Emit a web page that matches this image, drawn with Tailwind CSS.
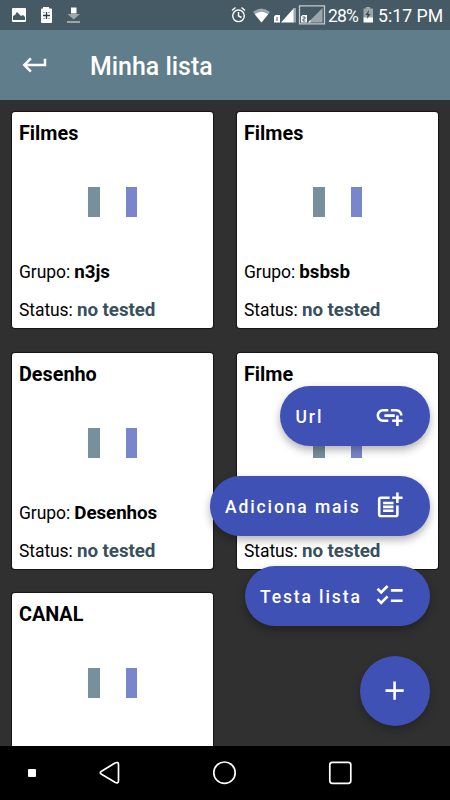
<!DOCTYPE html>
<html lang="pt">
<head>
<meta charset="utf-8">
<title>Minha lista</title>
<script src="https://cdn.jsdelivr.net/npm/@tailwindcss/browser@4"></script>
</head>
<body class="bg-black">
<div class="relative flex h-[800px] w-[450px] flex-col overflow-hidden bg-[#303030] font-['Roboto',sans-serif]">
  <!-- status bar -->
  <div class="flex h-[30px] shrink-0 items-center justify-between bg-[#455a64] pl-[12px] pr-[8px] text-white">
    <svg width="70" height="30" viewBox="12 0 70 30">
      <path fill="#fff" fill-rule="evenodd" d="M13 8h12a1 1 0 0 1 1 1v12a1 1 0 0 1-1 1H13a1 1 0 0 1-1-1V9a1 1 0 0 1 1-1zm0 12h12v-3l-2-2-2 1-4-4-2 3-2 1z"/>
      <path fill="#fff" d="M43 7h6v1.500h2a1 1 0 0 1 1 1V22a1 1 0 0 1-1 1H42a1 1 0 0 1-1-1V9.500a1 1 0 0 1 1-1h1z"/>
      <path stroke="#263f4a" stroke-width="1.300" d="M46.500 12v7M43 15.500h7"/>
      <path stroke="#455a64" stroke-width="1" d="M43.500 12.500h1M48.500 12.500h1M43.500 18.500h1M48.500 18.500h1"/>
      <path fill="#9ba6ab" d="M71 13h5.500V14H80l-6.300 5.500L67.500 14H71zM67 21h13v2H67z"/>
      <path fill="#fff" d="M71 7.500h5.500V13H71z"/>
    </svg>
    <div class="flex items-center">
      <svg width="97" height="30" viewBox="230 0 97 30">
        <g fill="none" stroke="#fff" stroke-width="1.400">
          <circle cx="238.500" cy="15.800" r="5.800"/>
          <path d="M238.500 12v4l3 1.500M232 10.500l3.500-3M245 10.500l-3.500-3"/>
        </g>
        <path fill="#9ba6ab" d="M253 12q8.500-7 17 0l-8.500 10.500z"/>
        <path fill="#fff" d="M254.800 14.200q6.700-5 13.400 0l-6.700 8.300z"/>
        <path fill="#9ba6ab" d="M293 8h3v14.500h-3z"/>
        <path fill="#fff" d="M281 22.500 293.500 8.500v14z"/>
        <path fill="#fff" d="M274 16.500l1.500-1.500h4.500v7.500h-6z"/>
        <path stroke="#455a64" d="M277 17v4"/>
        <path fill="none" stroke="#c2cacd" stroke-width="1.300" d="M299.500 5.800h25v18h-25z"/>
        <path fill="#9ba6ab" d="M308 22.500 322.500 8v14.500z"/>
        <path fill="#fff" d="M301 16.500l1.500-1.500h4.500v7.500h-6zM308 22.500l2.500-2.500v2.500z"/>
        <path fill="none" stroke="#455a64" d="M302.500 17h2.500v2h-2v2h2.500"/>
      </svg>
      <span class="w-[36px] whitespace-nowrap pl-px pt-[2px] text-[17.500px] leading-[30px] tracking-[-0.850px]">28%</span>
      <svg width="10" height="30" viewBox="363 0 10 30">
        <path fill="#9ba6ab" d="M366 7h4v1.500h3V18h-9.500V8.500h2.500z"/>
        <path fill="#fff" d="M363.500 17.500h9.500v5h-9.500z"/>
        <path fill="#344953" d="M369 10l-3.500 5h2l-.6 4 3.600-5h-2.200z"/>
      </svg>
      <span class="w-[69px] whitespace-nowrap pl-[5px] pt-[2px] text-[17.700px] leading-[30px]">5:17 PM</span>
    </div>
  </div>
  <!-- app bar -->
  <header class="flex h-[70px] shrink-0 items-center gap-[40px] bg-[#607d8b] pl-[20px] text-white">
    <svg width="30" height="30" viewBox="0 0 24 24" fill="currentColor"><path d="M19 7v4H5.830l3.580-3.590L8 6l-6 6 6 6 1.410-1.410L5.830 13H21V7z"/></svg>
    <h1 class="pt-[4px] text-[24.900px] font-medium leading-[30px]">Minha lista</h1>
  </header>
  <!-- list -->
  <main class="min-h-0 flex-1 overflow-hidden px-[12px] pt-[12px]">
    <div id="grid" class="grid grid-cols-2 gap-x-[24px] gap-y-[24.500px]"></div>
  </main>
  <template id="card">
    <article class="flex h-[216px] flex-col rounded-[3px] bg-white px-[7px] text-[17.500px] text-black shadow-[0_0_1px_1px_rgba(0,0,0,0.6)]">
      <h2 class="pt-[10px] text-[19.800px] font-bold leading-[24px]"></h2>
      <div class="mt-[41px] flex h-[30px] justify-center gap-[26px]">
        <span class="w-[11.500px] bg-[#78909c]"></span>
        <span class="w-[11.500px] bg-[#7986cb]"></span>
      </div>
      <p class="mt-[43px] leading-[24px] tracking-[-0.080px]">Grupo: <b class="text-[18.800px] font-bold"></b></p>
      <p class="mt-[14px] leading-[24px] tracking-[-0.080px]">Status: <b class="text-[18.800px] font-bold text-[#37505d]">no tested</b></p>
    </article>
  </template>
  <!-- floating actions -->
  <div class="absolute bottom-[74.500px] right-[20px] flex flex-col items-end gap-[30px] text-[17.500px] font-medium tracking-[1.880px] text-white">
    <button class="flex h-[60px] w-[150px] items-center justify-between rounded-full bg-[#3f51b5] pl-[15.500px] pr-[24.500px] shadow-[0_4px_8px_rgba(0,0,0,0.3)]"><span class="pt-[3px]">Url</span>
      <svg width="31.200" height="31.200" viewBox="0 0 24 24" fill="currentColor"><path d="M8 11h8v2H8v-2zm12.100 1H22c0-2.760-2.240-5-5-5h-4v1.900h4c1.710 0 3.100 1.390 3.100 3.100zM3.900 12c0-1.710 1.390-3.100 3.100-3.100h4V7H7c-2.760 0-5 2.240-5 5s2.240 5 5 5h4v-1.900H7c-1.710 0-3.100-1.390-3.100-3.100zM19 12h-2v3h-3v2h3v3h2v-3h3v-2h-3v-3z"/></svg>
    </button>
    <button class="flex h-[60px] w-[220.500px] items-center justify-between whitespace-nowrap rounded-full bg-[#3f51b5] pl-[15.500px] pr-[24.500px] shadow-[0_4px_8px_rgba(0,0,0,0.3)]"><span class="pt-[3px]">Adiciona mais</span>
      <svg width="31.200" height="31.200" viewBox="0 0 24 24" fill="currentColor"><path d="M17 19.220H5V7h7V5H5c-1.100 0-2 .9-2 2v12c0 1.100.9 2 2 2h12c1.100 0 2-.9 2-2v-7h-2v7.220zM19 2h-2v3h-3v2h3v3h2V7h3V5h-3V2zM7 9h8v2H7zM7 12h8v2H7zM7 15h8v2H7z"/></svg>
    </button>
    <button class="flex h-[60px] w-[185.500px] items-center justify-between whitespace-nowrap rounded-full bg-[#3f51b5] pl-[15.500px] pr-[24.500px] shadow-[0_4px_8px_rgba(0,0,0,0.3)]"><span class="pt-[3px]">Testa lista</span>
      <svg width="31.200" height="31.200" viewBox="0 0 24 24" fill="currentColor"><path d="M22 7h-9v2h9V7zm0 8h-9v2h9v-2zM5.540 11 2 7.460l1.410-1.410 2.120 2.120 4.240-4.240 1.410 1.410L5.540 11zm0 8L2 15.460l1.410-1.410 2.120 2.120 4.240-4.240 1.410 1.410L5.540 19z"/></svg>
    </button>
    <button class="flex size-[70px] items-center justify-center rounded-full bg-[#3f51b5] shadow-[0_4px_8px_rgba(0,0,0,0.25)]">
      <svg width="31.200" height="31.200" viewBox="0 0 24 24" fill="currentColor"><path d="M19 13h-6v6h-2v-6H5v-2h6V5h2v6h6v2z"/></svg>
    </button>
  </div>
  <!-- navigation bar -->
  <nav class="h-[54px] shrink-0 bg-black">
    <svg width="450" height="54" viewBox="0 746 450 54" fill="none" stroke="#fff" stroke-width="1.700" stroke-linejoin="round">
      <rect x="28" y="769" width="8" height="8" rx="1" fill="#fff" stroke="none"/>
      <path d="M101.500 771.300 115 763Q118.500 761.500 118.500 764.500V780.500Q118.500 784 115 782.200L101.500 774.200Q99 772.700 101.500 771.300z"/>
      <circle cx="224.500" cy="772.700" r="10.700"/>
      <rect x="329.800" y="762.300" width="21" height="21" rx="2.500"/>
    </svg>
  </nav>
</div>
<script>
// Details are left out where the row is scrolled under another element.
const items = [["Filmes", "n3js"], ["Filmes", "bsbsb"], ["Desenho", "Desenhos"], ["Filme", null], ["CANAL", null]];
const grid = document.getElementById("grid");
const card = document.getElementById("card");
items.forEach(([title, group], i) => {
  const node = card.content.cloneNode(true);
  node.querySelector("h2").textContent = title;
  const [groupRow, statusRow] = node.querySelectorAll("p");
  if (group) groupRow.querySelector("b").textContent = group;
  else groupRow.innerHTML = "&nbsp;";
  if (i === 4) statusRow.innerHTML = "&nbsp;";
  grid.appendChild(node);
});
</script>
</body>
</html>
